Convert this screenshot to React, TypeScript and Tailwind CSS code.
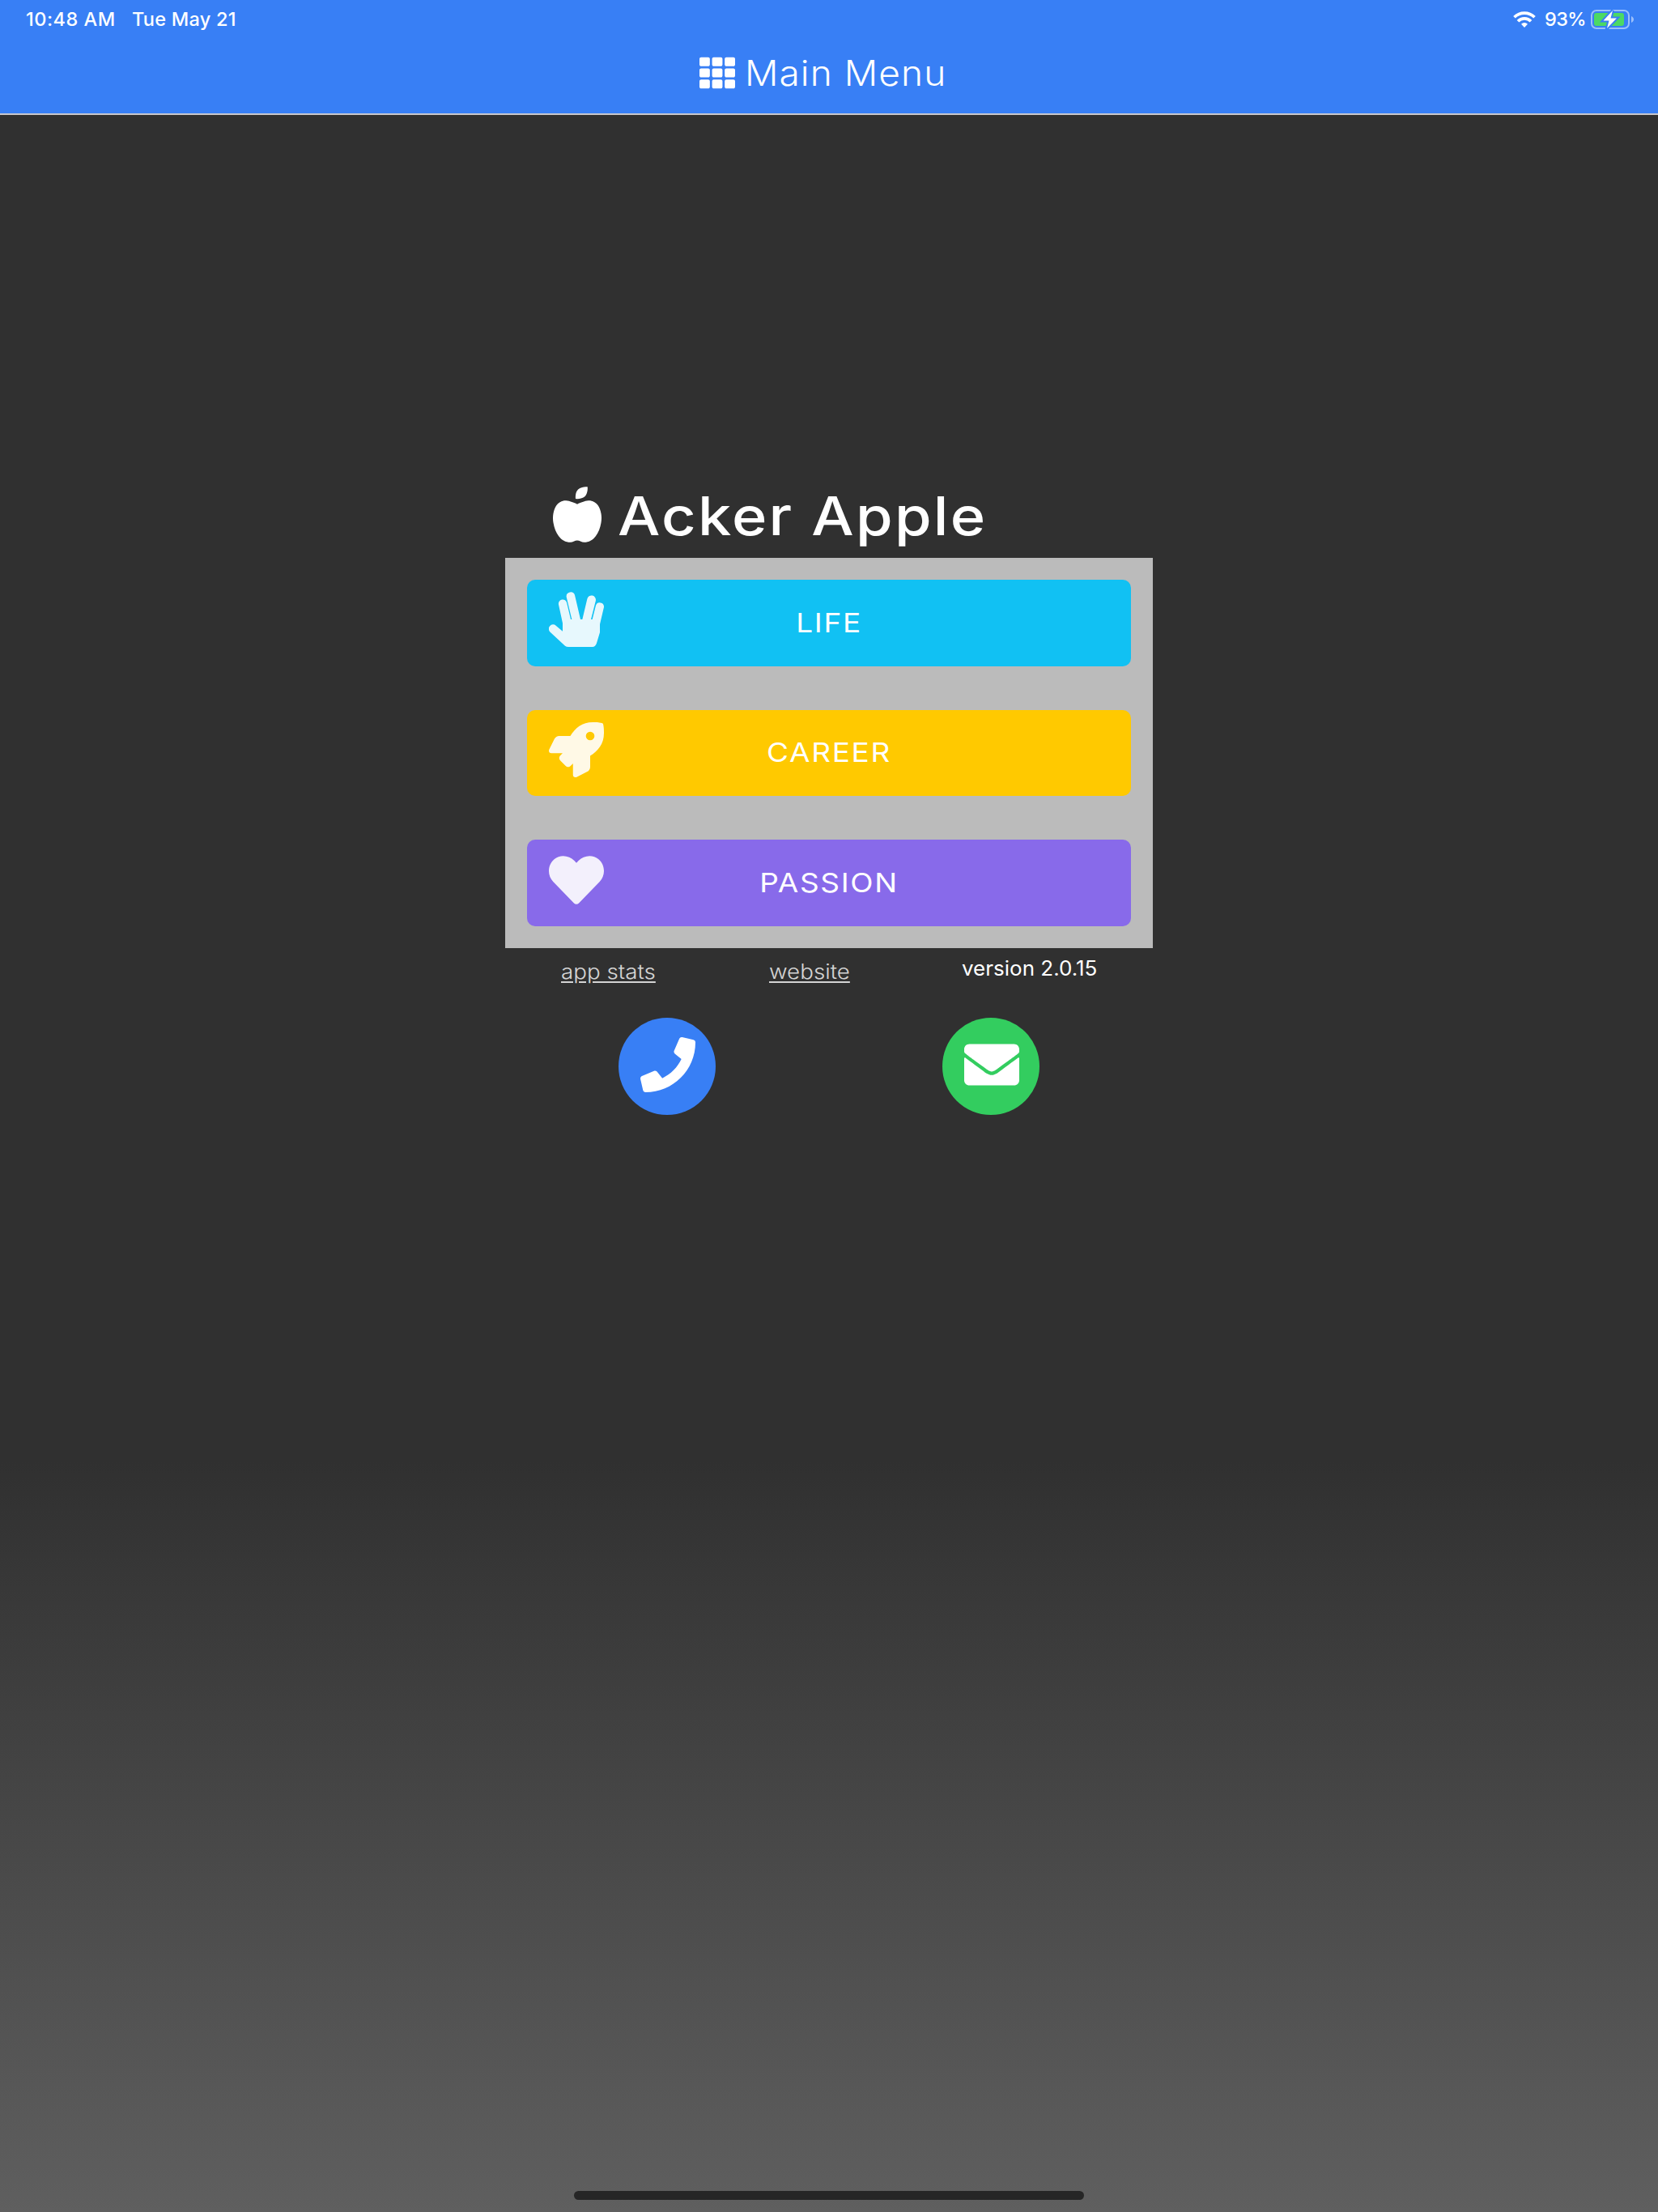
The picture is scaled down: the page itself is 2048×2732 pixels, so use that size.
import { FaTh, FaAppleAlt, FaRocket, FaHeart, FaPhone, FaEnvelope } from "react-icons/fa";
import type { ReactNode } from "react";

function StatusBar() {
  return (
    <div className="flex h-12 items-center justify-between pl-8 pr-[30px] text-[23.5px] font-medium leading-none">
      <div className="flex gap-[22px]">
        <span className="w-[109px] whitespace-nowrap tracking-[0.5px]">10:48 AM</span>
        <span className="whitespace-nowrap tracking-[0.25px]">Tue May 21</span>
      </div>
      <div className="flex items-center">
        <svg width="28" height="20" viewBox="0 0 28 20" fill="none" stroke="white" strokeWidth="3.7">
          <path d="M1.5 7.3a17.8 17.8 0 0 1 25 0" />
          <path d="M6 12.2a11.2 11.2 0 0 1 16 0" />
          <path d="M14 20l-4-4.3a5.8 5.8 0 0 1 8 0z" fill="white" stroke="none" />
        </svg>
        <span className="ml-[11px] w-[50px] whitespace-nowrap tracking-[-0.6px]">93%</span>
        <svg className="ml-[7px]" width="53" height="24" viewBox="0 0 53 24">
          <rect x="1" y="1" width="46" height="22" rx="6" fill="none" stroke="#9cbffb" strokeWidth="2" />
          <rect x="4" y="4" width="37" height="16" rx="3" fill="#4cd964" />
          <path d="M50 8c4 1.500 4 6.500 0 8z" fill="#9cbffb" />
          <path
            d="M27 1L15.500 13.500h7L20 23l12-12.500h-7.500z"
            fill="white"
            stroke="#387ff5"
            strokeWidth="4"
            paintOrder="stroke"
          />
        </svg>
      </div>
    </div>
  );
}

function SpockHand() {
  return (
    <svg width="68" height="68" viewBox="0 0 204 204" fill="currentColor">
      <path d="M51 146V116L36 47A15.500 15.500 0 0 1 66.500 41L81 102H85L65 19A16 16 0 0 1 96 12L117 102H124L142 26A16 16 0 0 1 173.500 33L156 102H161L174 50A15.500 15.500 0 0 1 204 56L189 120V150L177 190Q173 204 161 204H73Q65 204 60 200L5 149A15.500 15.500 0 0 1 26 125Z" />
    </svg>
  );
}

type MenuButtonProps = { label: string; icon: ReactNode; color: string };

function MenuButton({ label, icon, color }: MenuButtonProps) {
  return (
    <button
      className={`grid h-[106.67px] w-full grid-cols-[68px_1fr_68px] items-center rounded-[10px] px-[27px] text-[33px] ${color}`}
    >
      <span className="mb-[8px] opacity-90">{icon}</span>
      <span className="scale-x-[1.12] leading-none tracking-[1.5px]">{label}</span>
    </button>
  );
}

export default function App() {
  return (
    <div className="flex h-[2732px] w-[2048px] flex-col overflow-hidden bg-[linear-gradient(to_bottom,#303030_0%,#303030_66%,#5f5f5f_100%)] font-['Inter',sans-serif] text-white">
      <header className="h-[142px] border-b-2 border-[#c8c7cc] bg-[#387ff5]">
        <StatusBar />
        <div className="flex h-[84px] items-center pl-[864px]">
          <FaTh size={44} />
          <h1 className="ml-[12px] origin-left scale-x-[1.07] whitespace-nowrap text-[43px] font-light leading-none tracking-[1px]">
            Main Menu
          </h1>
        </div>
      </header>

      <main className="mx-auto mt-[459px] w-[800px]">
        <div className="flex h-[88px] items-start pl-[59px]">
          <FaAppleAlt className="h-[69px] w-[60px]" />
          <h2 className="ml-[20px] mt-[3px] origin-left scale-x-[1.12] whitespace-nowrap text-[66px] font-medium leading-none tracking-[2px]">
            Acker Apple
          </h2>
        </div>
        <div className="flex flex-col gap-[54px] bg-[#bbbbbb] p-[27px]">
          <MenuButton label="LIFE" icon={<SpockHand />} color="bg-[#11c1f3]" />
          <MenuButton label="CAREER" icon={<FaRocket size={68} />} color="bg-[#ffc900]" />
          <MenuButton label="PASSION" icon={<FaHeart size={68} />} color="bg-[#886aea]" />
        </div>
        <div className="grid h-[86px] grid-cols-[257px_238px_auto] items-start pl-[69px] pt-[10px] text-[25px] leading-[30px]">
          <a className="mt-[4px] origin-left scale-x-[1.11] justify-self-start whitespace-nowrap font-light text-[#d4d4d4] underline underline-offset-[3px]">
            app stats
          </a>
          <a className="mt-[4px] origin-left scale-x-[1.11] justify-self-start whitespace-nowrap font-light text-[#d4d4d4] underline underline-offset-[3px]">
            website
          </a>
          <span className="origin-left scale-x-[1.04] justify-self-start whitespace-nowrap">version 2.0.15</span>
        </div>
        <div className="flex justify-around">
          <button className="flex size-[120px] items-center justify-center rounded-full bg-[#387ff5] pb-[3px] pl-[2px]">
            <FaPhone size={68} />
          </button>
          <button className="flex size-[120px] items-center justify-center rounded-full bg-[#33cd5f] pb-[3px] pl-[2px]">
            <FaEnvelope size={68} />
          </button>
        </div>
      </main>

      <div className="mx-auto mb-[15px] mt-auto h-[11px] w-[630px] rounded-full bg-[#262626]" />
    </div>
  );
}
